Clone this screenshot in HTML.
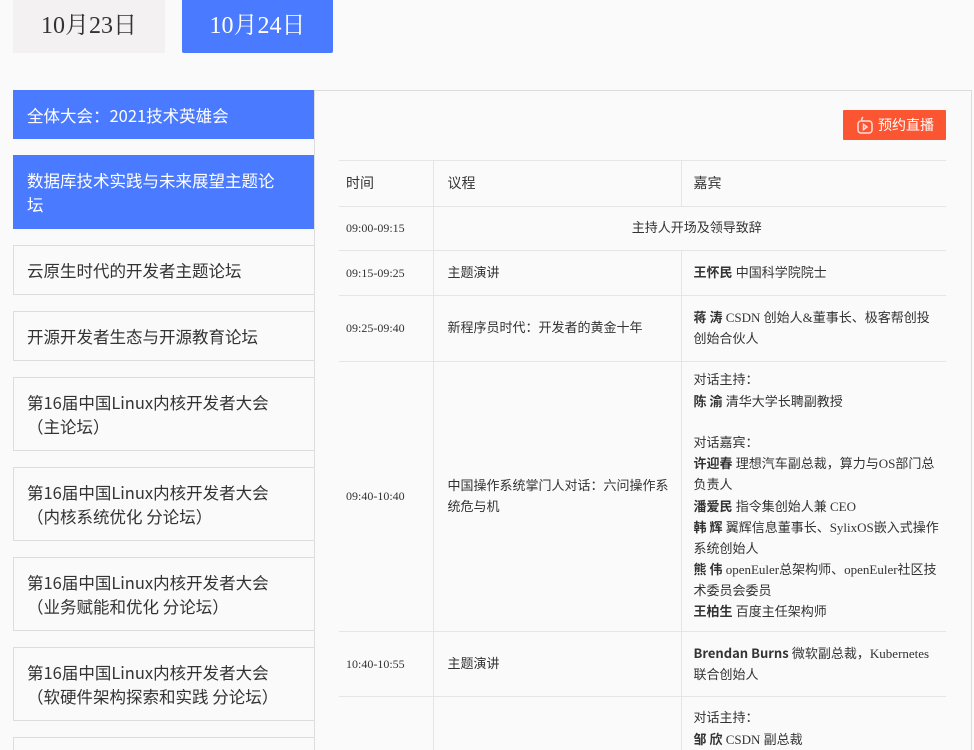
<!DOCTYPE html>
<html style="width:974px;height:750px;overflow:hidden"><head><meta charset="utf-8"><style>
*{margin:0;padding:0;box-sizing:border-box}
body{width:974px;height:750px;overflow:hidden;background:#fafafa;font-family:"Liberation Sans","Noto Sans CJK SC",sans-serif;color:#333;position:relative}
.tab{position:absolute;top:0;height:53px;width:152px;font-family:"Liberation Serif","Noto Serif CJK SC",serif;font-size:24px;text-align:center;line-height:53px}
.t1{left:13px;background:#f3f1f1;color:#333}
.t2{left:182px;width:151px;background:#4a7aff;color:#fff;border-radius:0 0 2px 2px}
.menu{position:absolute;left:13px;width:301px;font-family:"Noto Sans CJK SC",sans-serif;font-size:16.5px;line-height:24px;padding:0 34px 0 13px;display:flex;align-items:center;border:1px solid #ddd;border-right:none;color:#333;background:#fafafa}
.menu.on{background:#4a7aff;color:#fff;border-color:#4a7aff}
.panel{position:absolute;left:314px;top:90px;width:658px;height:660px;border:1px solid #ddd;border-bottom:none;background:#fafafa}
.btn{position:absolute;left:843px;top:110px;width:103px;height:30px;background:#fc5531;color:#fff;font-family:"Noto Sans CJK SC",sans-serif;font-size:14px;line-height:30px;padding-left:35px;border-radius:1px}
.btn svg{position:absolute;left:14px;top:6px}
table{position:absolute;left:339px;top:160px;width:607px;border-collapse:collapse;font-family:"Liberation Serif","Noto Sans CJK SC",serif;font-size:13px;color:#333}
td{border-top:1px solid #e5e5e5;border-bottom:1px solid #e5e5e5;vertical-align:middle;padding:0 12px;line-height:20.6px}
td+td{border-left:1px solid #e5e5e5}
td:first-child{padding:0 7px;font-size:12px;width:94px}
td:nth-child(2){width:248px;padding:0 0 0 14px}
td:nth-child(3){padding:0 6px 0 12px}
tr.h td{font-size:14px;font-family:"Noto Sans CJK SC",sans-serif;height:46px}
b{font-weight:bold;font-family:"Noto Sans CJK SC",sans-serif}
</style></head><body>
<div class="tab t1">10月23日</div>
<div class="tab t2">10月24日</div>
<div class="menu on" style="top:90px;height:49px">全体大会：2021技术英雄会</div>
<div class="menu on" style="top:155px;height:74px">数据库技术实践与未来展望主题论坛</div>
<div class="menu" style="top:245px;height:50px">云原生时代的开发者主题论坛</div>
<div class="menu" style="top:311px;height:50px">开源开发者生态与开源教育论坛</div>
<div class="menu" style="top:377px;height:74px">第16届中国Linux内核开发者大会<br>（主论坛）</div>
<div class="menu" style="top:467px;height:74px">第16届中国Linux内核开发者大会<br>（内核系统优化 分论坛）</div>
<div class="menu" style="top:557px;height:74px">第16届中国Linux内核开发者大会<br>（业务赋能和优化 分论坛）</div>
<div class="menu" style="top:647px;height:74px">第16届中国Linux内核开发者大会<br>（软硬件架构探索和实践 分论坛）</div>
<div class="menu" style="top:737px;height:13px;border-bottom:none"></div>
<div class="panel"></div>
<div class="btn"><svg width="16" height="18" viewBox="0 0 16 18" fill="none" stroke="#fdd" stroke-width="1.5"><rect x="1" y="5" width="14" height="12" rx="3"/><path d="M6 1 Q4 3 5 5"/><path d="M6.5 8.5 L10 11 L6.5 13.5Z"/></svg>预约直播</div>
<table>
<tr class="h"><td>时间</td><td>议程</td><td>嘉宾</td></tr>
<tr style="height:44px"><td>09:00-09:15</td><td colspan="2" style="text-align:center">主持人开场及领导致辞</td></tr>
<tr style="height:45px"><td>09:15-09:25</td><td>主题演讲</td><td><b>王怀民</b> 中国科学院院士</td></tr>
<tr style="height:66px"><td>09:25-09:40</td><td>新程序员时代：开发者的黄金十年</td><td><b>蒋 涛</b> CSDN 创始人&amp;董事长、极客帮创投创始合伙人</td></tr>
<tr style="height:270px"><td>09:40-10:40</td><td>中国操作系统掌门人对话：六问操作系统危与机</td><td>对话主持：<br><b>陈 渝</b> 清华大学长聘副教授<br><br>对话嘉宾：<br><b>许迎春</b> 理想汽车副总裁，算力与OS部门总负责人<br><b>潘爱民</b> 指令集创始人兼 CEO<br><b>韩 辉</b> 翼辉信息董事长、SylixOS嵌入式操作系统创始人<br><b>熊 伟</b> openEuler总架构师、openEuler社区技术委员会委员<br><b>王柏生</b> 百度主任架构师</td></tr>
<tr style="height:65px"><td>10:40-10:55</td><td>主题演讲</td><td><b>Brendan Burns</b> 微软副总裁，Kubernetes 联合创始人</td></tr>
<tr style="height:54px"><td style="border-bottom:none"></td><td style="border-bottom:none"></td><td style="vertical-align:top;padding-top:10px;border-bottom:none;line-height:21px">对话主持：<br><b>邹 欣</b> CSDN 副总裁</td></tr>
</table>
</body></html>
